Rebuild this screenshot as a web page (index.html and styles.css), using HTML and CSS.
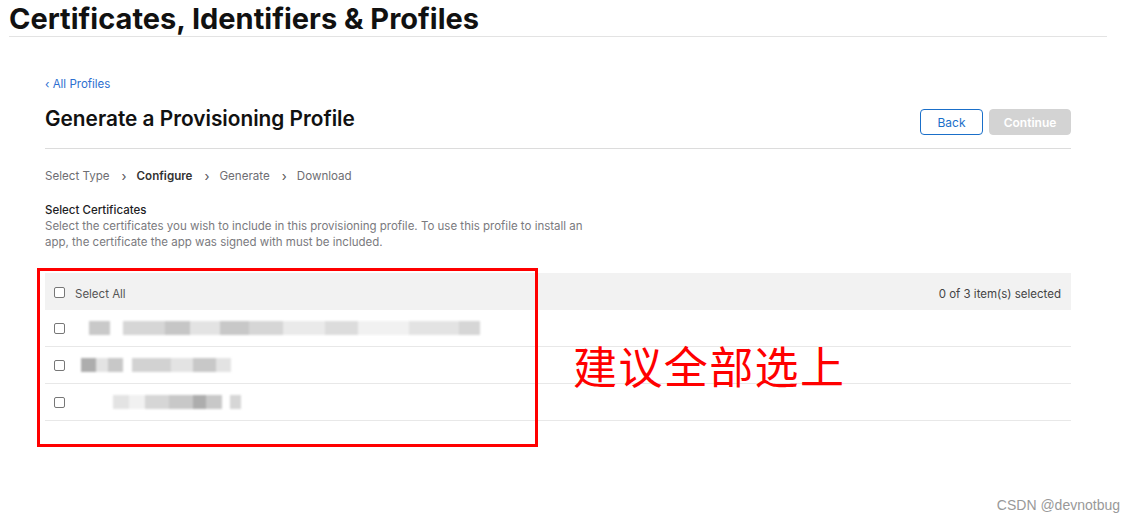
FILE: index.html
```html
<!DOCTYPE html>
<html>
<head>
<meta charset="utf-8">
<link rel="stylesheet" href="styles.css">
</head>
<body>
<div class="page">
  <header class="top">
    <h1 class="main-title">Certificates, Identifiers &amp; Profiles</h1>
  </header>
  <main class="content">
    <a class="back-link" href="#">‹ All Profiles</a>
    <div class="title-row">
      <h2 class="page-title">Generate a Provisioning Profile</h2>
      <div class="actions">
        <button class="btn btn-back">Back</button>
        <button class="btn btn-continue">Continue</button>
      </div>
    </div>
    <nav class="steps">
      <span class="step">Select Type</span>
      <span class="sep">›</span>
      <span class="step current">Configure</span>
      <span class="sep">›</span>
      <span class="step">Generate</span>
      <span class="sep">›</span>
      <span class="step">Download</span>
    </nav>
    <section class="section">
      <h3 class="section-title">Select Certificates</h3>
      <p class="section-desc">Select the certificates you wish to include in this provisioning profile. To use this profile to install an app, the certificate the app was signed with must be included.</p>
    </section>
    <div class="table">
      <div class="row head">
        <label class="cell-left"><span class="cb"></span><span class="sel-all">Select All</span></label>
        <span class="count">0 of 3 item(s) selected</span>
      </div>
      <div class="row">
        <label class="cell-left"><span class="cb"></span><span class="blur blur1"></span></label>
      </div>
      <div class="row">
        <label class="cell-left"><span class="cb"></span><span class="blur blur2"></span></label>
      </div>
      <div class="row">
        <label class="cell-left"><span class="cb"></span><span class="blur blur3"></span></label>
      </div>
    </div>
  </main>
  <div class="annot-box"></div>
  <div class="annot-text">建议全部选上</div>
  <div class="watermark">CSDN @devnotbug</div>
</div>
</body>
</html>
```

FILE: styles.css
```css
* { box-sizing: border-box; }
html, body { margin: 0; padding: 0; background: #fff; }
body { font-family: Inter, "Noto Sans", "Liberation Sans", sans-serif; color: #1d1d1f; }
.page { position: relative; width: 1135px; height: 523px; overflow: hidden; }

.top { margin: 0 28px 0 9px; border-bottom: 1px solid #e3e3e3; height: 37px; }
.main-title { margin: 0; padding-top: 2px; font-size: 29px; font-weight: 700; letter-spacing: 0; line-height: 34px; color: #111; }

.content { padding: 40px 64px 0 45px; }
.back-link { display: block; font-size: 11.5px; color: #2d6fd0; text-decoration: none; line-height: 14px; }
.title-row { display: flex; justify-content: space-between; align-items: center; margin-top: 18px; padding-bottom: 13px; border-bottom: 1px solid #dcdcdc; }
.page-title { margin: 0; font-size: 20.8px; font-weight: 600; color: #111; line-height: 26px; position: relative; top: -3px; }
.actions { display: flex; gap: 6px; }
.btn { font-family: inherit; font-size: 12px; height: 26px; border-radius: 4px; padding: 0; cursor: pointer; }
.btn-back { width: 63px; background: #fff; border: 1px solid #1a6fc9; color: #1a6fc9; }
.btn-continue { width: 82px; background: #d3d3d3; border: 1px solid #d3d3d3; color: #fff; font-weight: 600; }

.steps { display: flex; align-items: center; margin-top: 20px; font-size: 11.6px; color: #6e6e73; line-height: 15px; }
.step.current { color: #333; font-weight: 600; }
.sep { margin: 0 10px 0 12px; color: #555; font-size: 13px; }

.section { margin-top: 18px; }
.section-title { margin: 0; font-size: 11.5px; font-weight: 500; color: #1d1d1f; line-height: 16px; }
.section-desc { margin: 0; width: 550px; font-size: 11.5px; color: #7a7a7e; line-height: 16px; }

.table { margin-top: 23px; }
.row { display: flex; align-items: center; justify-content: space-between; height: 37px; border-bottom: 1px solid #e8e8e8; padding: 0 10px 0 9px; }
.row.head { background: #f2f2f2; border-bottom: none; padding-top: 4px; }
.cell-left { display: flex; align-items: center; }
.cb { width: 11px; height: 11px; border: 1px solid #777; border-radius: 2px; background: #fff; }
.head .cb { position: relative; top: -1px; }
.sel-all { margin-left: 10px; font-size: 11.5px; color: #555; }
.count { font-size: 11.5px; color: #444; }

.blur { display: inline-block; height: 14px; margin-left: 16px; filter: blur(1.2px); opacity: .8; }
.blur1 { width: 420px; background: linear-gradient(90deg, #fff 0 2%, #bcbcbc 2% 7%, #fff 7% 10%, #ccc 10% 20%, #b8b8b8 20% 26%, #ddd 26% 33%, #bbb 33% 40%, #ccc 40% 48%, #e5e5e5 48% 58%, #d4d4d4 58% 66%, #eee 66% 78%, #ddd 78% 90%, #ccc 90% 95%, #fff 95%); }
.blur2 { width: 150px; background: linear-gradient(90deg, #999 0 10%, #ddd 10% 18%, #bbb 18% 28%, #fff 28% 34%, #c8c8c8 34% 60%, #ddd 60% 75%, #bbb 75% 90%, #ddd 90%); }
.blur3 { width: 160px; background: linear-gradient(90deg, #fff 0 20%, #ddd 20% 30%, #eee 30% 40%, #ccc 40% 55%, #bbb 55% 70%, #999 70% 78%, #bbb 78% 88%, #fff 88% 93%, #ccc 93%); }

.annot-box { position: absolute; left: 37px; top: 268px; width: 501px; height: 179px; border: 3px solid #ff0000; }
.annot-text { position: absolute; left: 573px; top: 338px; font-family: "Noto Sans CJK SC", sans-serif; font-size: 44px; line-height: 54px; color: #ff0000; letter-spacing: 1.4px; }
.watermark { position: absolute; right: 15px; top: 497px; font-family: "Liberation Sans", Arial, sans-serif; font-size: 14px; color: #999; }
```
